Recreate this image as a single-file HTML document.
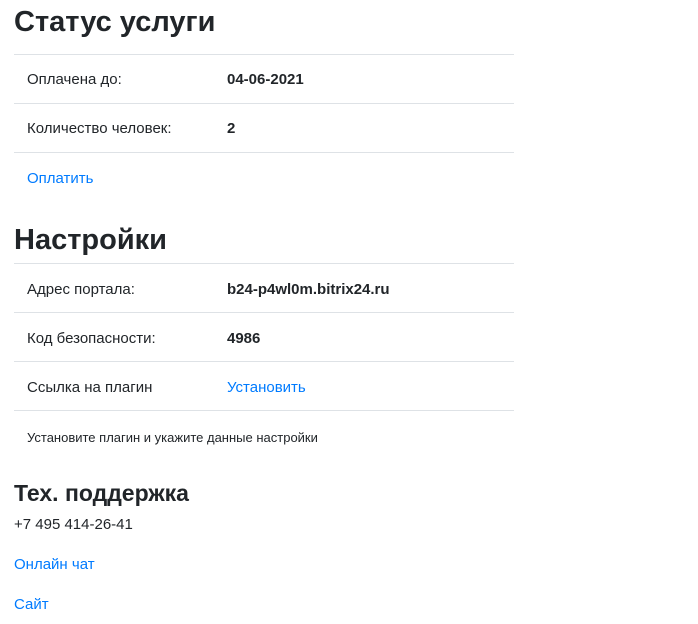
<!DOCTYPE html>
<html><head><meta charset="utf-8"><style>
body{margin:0;background:#fff;font-family:"Liberation Sans",sans-serif;color:#212529;width:698px;height:624px;position:relative;overflow:hidden}
.a{position:absolute;white-space:nowrap}
h2{position:absolute;margin:0;font-weight:bold;font-size:29px;left:14px;line-height:1}
.l{position:absolute;left:14px;width:500px;height:1px;background:#dee2e6}
.t{font-size:15px;left:27px}
.v{font-size:15px;left:227px;font-weight:bold}
.b{color:#007bff}
</style></head><body>
<h2 style="top:8px">Статус услуги</h2>
<div class="l" style="top:54px"></div>
<div class="a t" style="top:71px">Оплачена до:</div>
<div class="a v" style="top:71px">04-06-2021</div>
<div class="l" style="top:103px"></div>
<div class="a t" style="top:120px">Количество человек:</div>
<div class="a v" style="top:120px">2</div>
<div class="l" style="top:152px"></div>
<div class="a t b" style="top:170px">Оплатить</div>
<h2 style="top:226px">Настройки</h2>
<div class="l" style="top:263px"></div>
<div class="a t" style="top:281px">Адрес портала:</div>
<div class="a v" style="top:281px">b24-p4wl0m.bitrix24.ru</div>
<div class="l" style="top:312px"></div>
<div class="a t" style="top:330px">Код безопасности:</div>
<div class="a v" style="top:330px">4986</div>
<div class="l" style="top:361px"></div>
<div class="a t" style="top:379px">Ссылка на плагин</div>
<div class="a b" style="top:379px;left:227px;font-size:15px">Установить</div>
<div class="l" style="top:410px"></div>
<div class="a" style="top:430px;left:27px;font-size:13px">Установите плагин и укажите данные настройки</div>
<div class="a" style="top:480px;left:14px;font-size:23px;font-weight:bold">Тех. поддержка</div>
<div class="a" style="top:516px;left:14px;font-size:15px">+7 495 414-26-41</div>
<div class="a b" style="top:556px;left:14px;font-size:15px">Онлайн чат</div>
<div class="a b" style="top:596px;left:14px;font-size:15px">Сайт</div>
</body></html>
